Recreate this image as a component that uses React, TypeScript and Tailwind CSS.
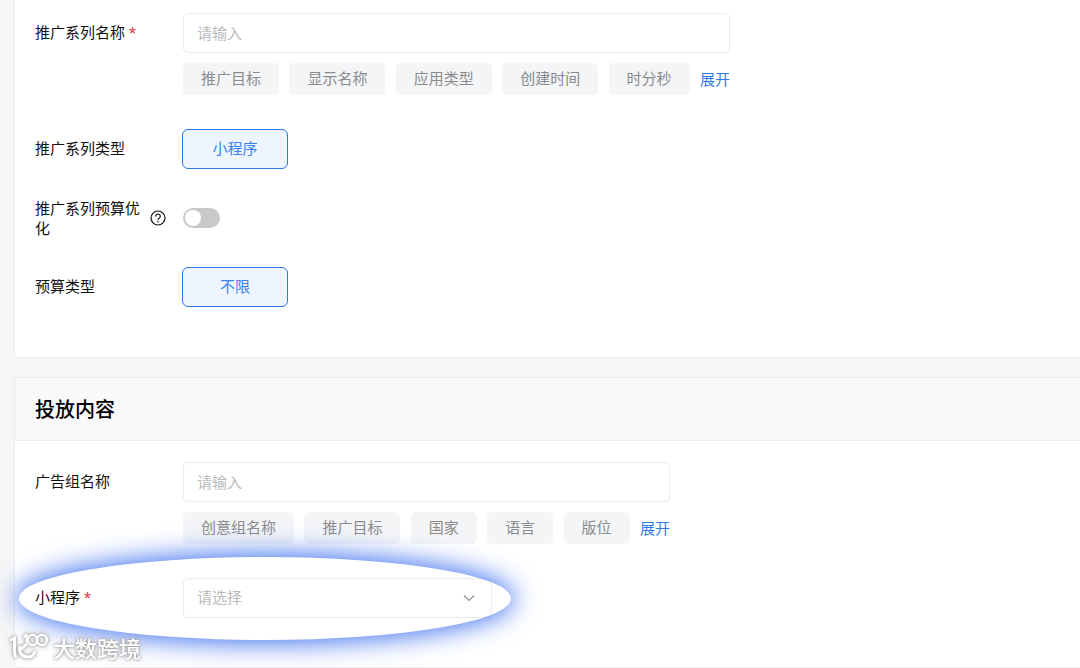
import { useState, type ReactNode } from "react";

function Row({
  label,
  htmlFor,
  required,
  tip,
  children,
}: {
  label: string;
  htmlFor: string;
  required?: boolean;
  tip?: ReactNode;
  children: ReactNode;
}) {
  return (
    <div className="flex items-start">
      <div className="flex min-h-[38px] w-[148px] shrink-0 items-center gap-1">
        <label htmlFor={htmlFor} className="w-[111px] text-[15px] leading-5 text-[#111]">
          {label}
          {required && (
            <span className="ml-1 align-middle font-['Liberation_Sans',sans-serif] text-[18px] leading-3 text-[#e0383a]">
              *
            </span>
          )}
        </label>
        {tip}
      </div>
      <div className="flex min-h-10 min-w-0 items-center">{children}</div>
    </div>
  );
}

function NameField({ id, tags, width }: { id: string; tags: string[]; width: string }) {
  const [value, setValue] = useState("");
  return (
    <div className={`flex flex-col gap-[10px] ${width}`}>
      <input
        id={id}
        type="text"
        value={value}
        onChange={(e) => setValue(e.target.value)}
        placeholder="请输入"
        className="h-10 w-full rounded-[5px] border border-[#eaebec] bg-white px-[13px] pb-[2px] text-[15px] text-[#222] outline-none placeholder:text-[#b9babb]"
      />
      <div className="flex items-center justify-between">
        {tags.map((t) => (
          <button
            key={t}
            type="button"
            className="h-8 rounded-[5px] bg-[#f4f5f7] px-[18px] pb-[2px] text-[15px] leading-5 whitespace-nowrap text-[#8a8b8c]"
            onClick={() => setValue((v) => v + t)}
          >
            {t}
          </button>
        ))}
        <a href="#" className="text-[15px] leading-5 whitespace-nowrap text-[#2f7be6]">
          展开
        </a>
      </div>
    </div>
  );
}

function Choice({ id, children }: { id: string; children: ReactNode }) {
  return (
    <button
      id={id}
      type="button"
      className="-ml-px h-10 w-[106px] rounded-md border border-[#2b78e4] bg-[#eef5ff] pb-[2px] text-[15px] text-[#3a83ee]"
    >
      {children}
    </button>
  );
}

function HelpIcon() {
  return (
    <svg viewBox="0 0 16 16" className="size-4 shrink-0" fill="none" stroke="#111" aria-hidden="true">
      <circle cx="8" cy="8" r="7" strokeWidth="1.2" />
      <path d="M5.700 6.400a2.300 2.300 0 1 1 3.500 1.900C8.400 8.800 8 9.100 8 9.900" strokeWidth="1.2" />
      <circle cx="8" cy="11.700" r="0.8" fill="#111" stroke="none" />
    </svg>
  );
}

function Watermark() {
  return (
    <div className="pointer-events-none absolute bottom-[6px] left-[9px] flex items-center gap-1 text-white [filter:drop-shadow(0_0_1px_#999)_drop-shadow(0_0_2px_#bbb)]">
      <svg viewBox="0 0 40 30" className="h-[30px] w-10" fill="none" stroke="currentColor" strokeWidth="3" aria-hidden="true">
        <path d="M1 8.500 5.500 6V20c0 2.500.5 4 1.500 5.500" />
        <path d="M17 12.500 11 18M10.500 14c-.5 6 2 10.500 7.500 11 4 .3 7-2 8-6" />
        <path d="M14.500 5 17.500 3v11" strokeWidth="2.300" />
        <ellipse cx="23.500" cy="8" rx="4.500" ry="5.200" strokeWidth="2.300" />
        <ellipse cx="33" cy="8" rx="5" ry="5.200" strokeWidth="2.300" />
      </svg>
      <span className="text-[22px] leading-[30px] font-medium">大数跨境</span>
    </div>
  );
}

export default function App() {
  const [on, setOn] = useState(false);
  return (
    <main className="relative flex min-h-screen flex-col gap-[19px] overflow-hidden bg-[#f6f6f6] pl-[14px] font-['Noto_Sans_CJK_SC',sans-serif]">
      <section className="flex flex-col rounded-bl border-b border-l border-[#ececec] bg-white pt-[13px] pb-[50px] pl-5">
        <Row label="推广系列名称" htmlFor="series" required>
          <NameField
            id="series"
            width="w-[547px]"
            tags={["推广目标", "显示名称", "应用类型", "创建时间", "时分秒"]}
          />
        </Row>
        <div className="mt-[34px] flex flex-col gap-[29px]">
          <Row label="推广系列类型" htmlFor="kind">
            <Choice id="kind">小程序</Choice>
          </Row>
          <Row label="推广系列预算优化" htmlFor="optimize" tip={<HelpIcon />}>
            <input
              id="optimize"
              type="checkbox"
              role="switch"
              checked={on}
              onChange={() => setOn(!on)}
              className="h-5 w-[37px] appearance-none rounded-full bg-[#c9c9c9] p-[2px] before:block before:size-4 before:rounded-full before:bg-white checked:bg-[#2b78e4] checked:before:ml-auto"
            />
          </Row>
          <Row label="预算类型" htmlFor="budget">
            <Choice id="budget">不限</Choice>
          </Row>
        </div>
      </section>

      <section className="rounded-l border-y border-l border-[#ececec] bg-white">
        <header className="flex h-[63px] items-center rounded-tl border-b border-[#ececec] bg-[#f9f9f9] pl-5">
          <h2 className="text-[20px] leading-7 font-medium text-black">投放内容</h2>
        </header>
        <div className="flex flex-col gap-[34px] pt-[21px] pb-[49px] pl-5">
          <Row label="广告组名称" htmlFor="group">
            <NameField
              id="group"
              width="w-[487px]"
              tags={["创意组名称", "推广目标", "国家", "语言", "版位"]}
            />
          </Row>
          <div className="relative">
            <Row label="小程序" htmlFor="app" required>
              <div className="relative w-[309px]">
                <select
                  id="app"
                  defaultValue=""
                  className="h-10 w-full appearance-none rounded-[5px] border border-[#eaebec] bg-white px-[13px] pb-[2px] text-[15px] text-[#b9babb] outline-none"
                >
                  <option value="">请选择</option>
                </select>
                <svg
                  viewBox="0 0 12 12"
                  className="pointer-events-none absolute top-[14px] right-[17px] size-3"
                  fill="none"
                  stroke="#909192"
                  strokeWidth="1.2"
                  aria-hidden="true"
                >
                  <path d="M1 3.500 6 8.500 11 3.500" />
                </svg>
              </div>
            </Row>
            <div className="pointer-events-none absolute -top-[21px] -left-4 h-[83px] w-[492px] rounded-[50%] shadow-[0_0_27px_3px_#3f70ee]" />
          </div>
        </div>
      </section>
      <Watermark />
    </main>
  );
}
